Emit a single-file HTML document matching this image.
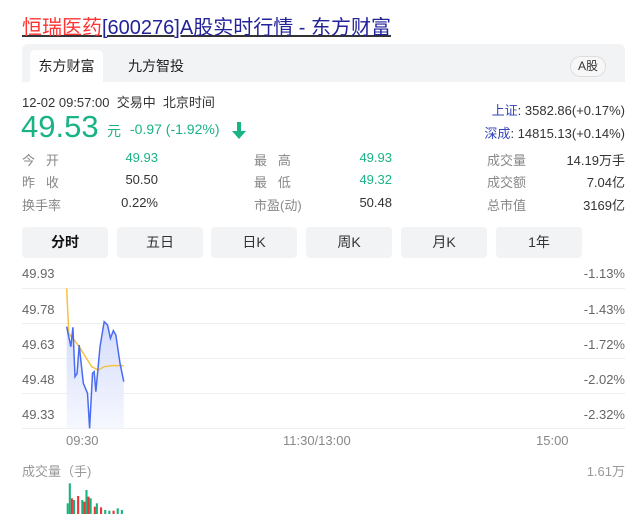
<!DOCTYPE html>
<html><head><meta charset="utf-8"><style>
*{margin:0;padding:0;box-sizing:border-box}
body{width:643px;height:514px;overflow:hidden;background:#fff;font-family:"Liberation Sans","Noto Sans CJK SC",sans-serif;position:relative;color:#333}
.a{position:absolute;white-space:nowrap}
.g{color:#1ab386}
.lbl{color:#888;font-size:13px}
.v{font-size:13px;text-align:right}
.btn{position:absolute;top:227px;width:86px;height:31px;background:#f2f3f5;border-radius:4px;font-size:14px;color:#333;text-align:center;line-height:31px}
.yl{position:absolute;font-size:13px;color:#666}
.gl{position:absolute;left:22px;width:603px;height:1px;background:#eceef1}
</style></head><body>
<div class="a" style="left:22px;top:11px;font-size:20px;text-decoration:underline;"><span style="color:#f33">恒瑞医药</span><span style="color:#22229a">[600276]A股实时行情 - 东方财富</span></div>
<div class="a" style="left:22px;top:44px;width:603px;height:38px;background:#f2f3f5;border-radius:6px 6px 0 0"></div>
<div class="a" style="left:30px;top:50px;width:73px;height:32px;background:#fff;border-radius:5px 5px 0 0;font-size:14px;line-height:32px;text-align:center;color:#222">东方财富</div>
<div class="a" style="left:128px;top:50px;font-size:14px;line-height:32px;color:#222">九方智投</div>
<div class="a" style="left:570px;top:56px;width:36px;height:21px;border:1px solid #ddd;border-radius:11px;background:#f7f7f8;font-size:12px;line-height:19px;text-align:center">A股</div>
<div class="a" style="left:22px;top:92px;font-size:13px;color:#333">12-02 09:57:00&nbsp; 交易中&nbsp; 北京时间</div>
<div class="a g" style="left:21px;top:109px;font-size:31px">49.53</div>
<div class="a g" style="left:107px;top:121px;font-size:14px">元</div>
<div class="a g" style="left:130px;top:121px;font-size:14px">-0.97 (-1.92%)</div>
<svg class="a" style="left:232px;top:122px" width="14" height="17" viewBox="0 0 14 17"><path d="M5 0h4v9h5l-7 8-7-8h5z" fill="#1ab386"/></svg>
<div class="a" style="right:18px;top:100px;font-size:13px"><span style="color:#3344bb">上证</span>: 3582.86(+0.17%)</div>
<div class="a" style="right:18px;top:123px;font-size:13px"><span style="color:#3344bb">深成</span>: 14815.13(+0.14%)</div>

<div class="a lbl" style="left:22px;top:150px">今&nbsp;&nbsp;&nbsp;开</div>
<div class="a lbl" style="left:22px;top:172px">昨&nbsp;&nbsp;&nbsp;收</div>
<div class="a lbl" style="left:22px;top:195px">换手率</div>
<div class="a v g" style="right:485px;top:150px">49.93</div>
<div class="a v" style="right:485px;top:172px">50.50</div>
<div class="a v" style="right:485px;top:195px">0.22%</div>
<div class="a lbl" style="left:254px;top:150px">最&nbsp;&nbsp;&nbsp;高</div>
<div class="a lbl" style="left:254px;top:172px">最&nbsp;&nbsp;&nbsp;低</div>
<div class="a lbl" style="left:254px;top:195px">市盈(动)</div>
<div class="a v g" style="right:251px;top:150px">49.93</div>
<div class="a v g" style="right:251px;top:172px">49.32</div>
<div class="a v" style="right:251px;top:195px">50.48</div>
<div class="a lbl" style="left:487px;top:150px">成交量</div>
<div class="a lbl" style="left:487px;top:172px">成交额</div>
<div class="a lbl" style="left:487px;top:195px">总市值</div>
<div class="a v" style="right:18px;top:150px">14.19万手</div>
<div class="a v" style="right:18px;top:172px">7.04亿</div>
<div class="a v" style="right:18px;top:195px">3169亿</div>

<div class="btn" style="left:22px;font-weight:bold;color:#111">分时</div>
<div class="btn" style="left:117px">五日</div>
<div class="btn" style="left:211px">日K</div>
<div class="btn" style="left:306px">周K</div>
<div class="btn" style="left:401px">月K</div>
<div class="btn" style="left:496px">1年</div>

<div class="yl" style="left:22px;top:266px">49.93</div>
<div class="yl" style="left:22px;top:302px">49.78</div>
<div class="yl" style="left:22px;top:337px">49.63</div>
<div class="yl" style="left:22px;top:372px">49.48</div>
<div class="yl" style="left:22px;top:407px">49.33</div>
<div class="yl" style="right:18px;top:266px">-1.13%</div>
<div class="yl" style="right:18px;top:302px">-1.43%</div>
<div class="yl" style="right:18px;top:337px">-1.72%</div>
<div class="yl" style="right:18px;top:372px">-2.02%</div>
<div class="yl" style="right:18px;top:407px">-2.32%</div>
<div class="gl" style="top:288px"></div>
<div class="gl" style="top:323px"></div>
<div class="gl" style="top:358px"></div>
<div class="gl" style="top:393px"></div>
<div class="gl" style="top:428px"></div>
<div class="yl" style="left:66px;top:433px;color:#888">09:30</div>
<div class="yl" style="left:283px;top:433px;color:#888">11:30/13:00</div>
<div class="yl" style="left:536px;top:433px;color:#888">15:00</div>
<div class="yl" style="left:22px;top:461px;color:#999">成交量（手)</div>
<div class="yl" style="right:18px;top:461px;color:#999">1.61万</div>

<svg class="a" style="left:0;top:220px" width="643" height="294" viewBox="0 0 1543 882" preserveAspectRatio="none">
<defs><linearGradient id="f" x1="0" y1="0" x2="0" y2="1"><stop offset="0" stop-color="#c9d3fa"/><stop offset="1" stop-color="#f4f6fe"/></linearGradient></defs>
<path d="M160 320L170 380L175 322L180 470L185 460L190 375L200 490L210 520L215 625L222 460L226 455L230 515L240 380L250 305L258 315L265 355L272 332L278 345L288 430L297 485L297 625L160 625Z" fill="url(#f)" opacity=".8"/>
<path d="M160 205L165 340L175 355L190 380L210 420L220 440L235 450L250 440L270 437L297 437" fill="none" stroke="#f5c242" stroke-width="1.5" vector-effect="non-scaling-stroke"/>
<path d="M160 320L170 380L175 322L180 470L185 460L190 375L200 490L210 520L215 625L222 460L226 455L230 515L240 380L250 305L258 315L265 355L272 332L278 345L288 430L297 485" fill="none" stroke="#4a6cf0" stroke-width="1.5" vector-effect="non-scaling-stroke"/>
<g fill="#17b27e">
<rect x="160" y="850" width="5" height="32"/><rect x="165" y="790" width="5" height="92"/><rect x="175" y="840" width="5" height="42"/><rect x="195" y="840" width="5" height="42"/><rect x="205" y="810" width="5" height="72"/><rect x="215" y="835" width="5" height="47"/><rect x="230" y="850" width="5" height="32"/><rect x="250" y="870" width="5" height="12"/><rect x="260" y="872" width="5" height="10"/><rect x="280" y="865" width="5" height="17"/><rect x="290" y="870" width="5" height="12"/>
</g>
<g fill="#ee3333">
<rect x="170" y="835" width="5" height="47"/><rect x="185" y="828" width="5" height="54"/><rect x="200" y="845" width="5" height="37"/><rect x="210" y="830" width="5" height="52"/><rect x="225" y="860" width="5" height="22"/><rect x="240" y="862" width="5" height="20"/><rect x="270" y="872" width="5" height="10"/>
</g>
</svg>
</body></html>
